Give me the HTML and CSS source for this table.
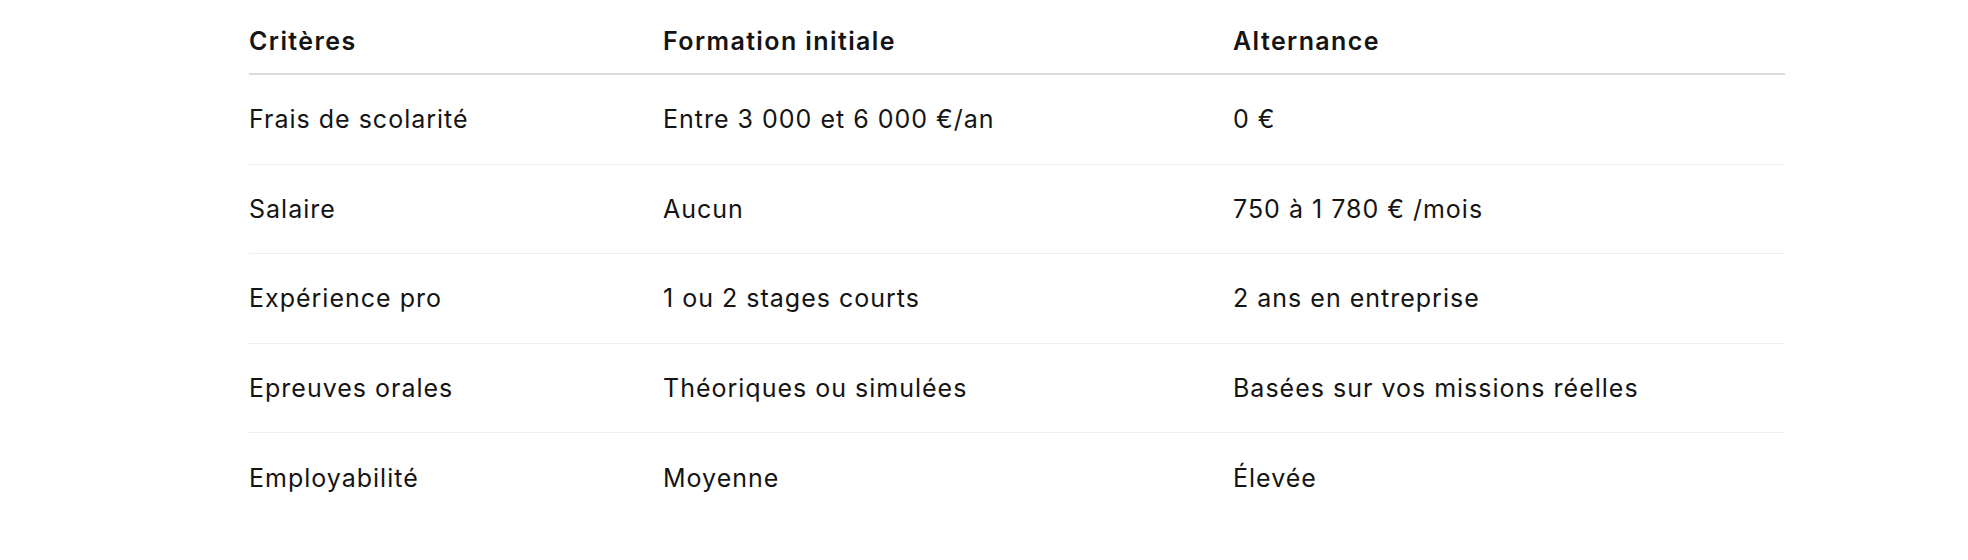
FILE: index.html
```html
<!DOCTYPE html>
<html lang="fr">
<head>
<meta charset="utf-8">
<title>Comparatif</title>
<link rel="stylesheet" href="styles.css">
</head>
<body>
<div class="wrap">
<table class="compare">
  <colgroup>
    <col class="c1">
    <col class="c2">
    <col class="c3">
  </colgroup>
  <thead>
    <tr><th>Critères</th><th>Formation initiale</th><th>Alternance</th></tr>
  </thead>
  <tbody>
    <tr><td>Frais de scolarité</td><td>Entre 3 000 et 6 000 €/an</td><td>0 €</td></tr>
    <tr><td>Salaire</td><td>Aucun</td><td>750 à 1 780 € /mois</td></tr>
    <tr><td>Expérience pro</td><td>1 ou 2 stages courts</td><td>2 ans en entreprise</td></tr>
    <tr><td>Epreuves orales</td><td>Théoriques ou simulées</td><td>Basées sur vos missions réelles</td></tr>
    <tr class="last"><td>Employabilité</td><td>Moyenne</td><td>Élevée</td></tr>
  </tbody>
</table>
</div>
</body>
</html>
```
FILE: styles.css
```css
html, body {
  margin: 0;
  padding: 0;
  background: #ffffff;
}
.wrap {
  padding: 8px 0 0 249px;
}
.compare {
  width: 1536px;
  border-collapse: collapse;
  table-layout: fixed;
  font-family: Inter, "Noto Sans", sans-serif;
  font-size: 25px;
  line-height: 36px;
  letter-spacing: 1px;
  color: #141414;
}
.c1 { width: 414px; }
.c2 { width: 570px; }
.c3 { width: 552px; }
.compare th {
  text-align: left;
  font-weight: 600;
  letter-spacing: 1.4px;
  padding: 15px 0 14px 0;
  border-bottom: 2px solid #dcdcdc;
}
.compare td {
  padding: 26.3px 0;
  border-bottom: 1px solid #efefef;
}
.compare tr.last td {
  border-bottom: none;
}
```
